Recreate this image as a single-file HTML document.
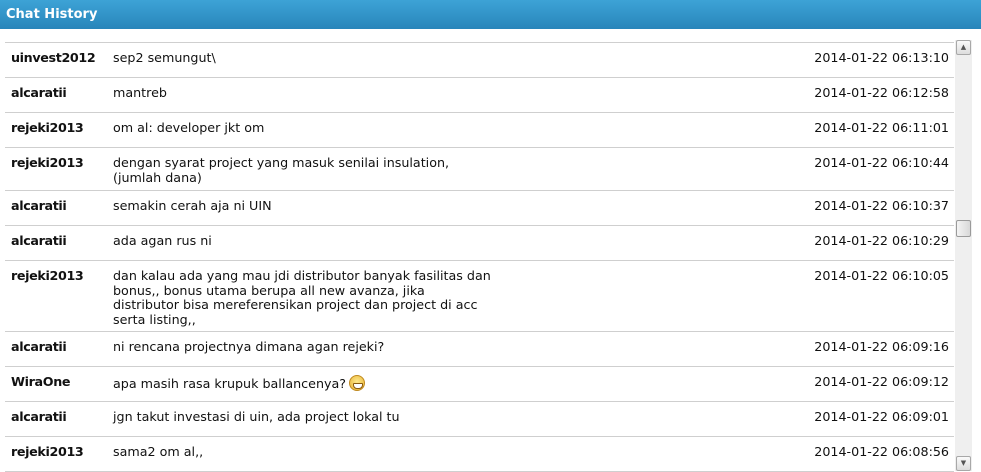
<!DOCTYPE html>
<html><head><style>
*{margin:0;padding:0;box-sizing:border-box}
body{width:981px;height:471px;overflow:hidden;background:#fff;font-family:Verdana,"DejaVu Sans",sans-serif;font-size:12.7px;color:#111;position:relative}
.hd{position:absolute;left:0;top:0;width:981px;height:29px;background:linear-gradient(#3da3d6,#2885ba);color:#fff;font-weight:bold;font-size:13px;padding:7px 0 0 6px}
.tb{position:absolute;left:5px;top:42px;width:949px;border-top:1px solid #cfcfcf}
.r{position:relative;border-bottom:1px solid #cfcfcf;line-height:14.7px}
.n{position:absolute;left:6px;top:8px;font-weight:bold;letter-spacing:-0.35px}
.m{position:absolute;left:108px;top:8px}
.d{position:absolute;right:5px;top:8px}
.sb{position:absolute;left:955px;top:40px;width:17px;height:431px;background:#efefef}
.btn{position:absolute;left:956px;width:15px;height:15px;background:linear-gradient(#fafafa,#ddd);border:1px solid #a8a8a8;border-radius:2px}
.th{position:absolute;left:956px;top:220px;width:15px;height:17px;background:linear-gradient(90deg,#f4f4f4,#d8d8d8);border:1px solid #9a9a9a;border-radius:2px}
.emo{display:inline-block;width:16px;height:16px;border-radius:50%;background:radial-gradient(circle at 50% 40%,#fde88a,#e8b030);border:1px solid #c08a20;vertical-align:-3px;margin-left:3px;position:relative}
.emo:after{content:"";position:absolute;left:3px;top:7px;width:8px;height:4px;background:#fff;border:1px solid #8a5a10;border-radius:1px 1px 4px 4px}
</style></head><body>
<div class="hd">Chat History</div>
<div class="tb">
<div class="r" style="height:35px"><span class="n">uinvest2012</span><span class="m">sep2 semungut\</span><span class="d">2014-01-22 06:13:10</span></div>
<div class="r" style="height:35px"><span class="n">alcaratii</span><span class="m">mantreb</span><span class="d">2014-01-22 06:12:58</span></div>
<div class="r" style="height:35px"><span class="n">rejeki2013</span><span class="m">om al: developer jkt om</span><span class="d">2014-01-22 06:11:01</span></div>
<div class="r" style="height:43px"><span class="n">rejeki2013</span><span class="m">dengan syarat project yang masuk senilai insulation,<br>(jumlah dana)</span><span class="d">2014-01-22 06:10:44</span></div>
<div class="r" style="height:35px"><span class="n">alcaratii</span><span class="m">semakin cerah aja ni UIN</span><span class="d">2014-01-22 06:10:37</span></div>
<div class="r" style="height:35px"><span class="n">alcaratii</span><span class="m">ada agan rus ni</span><span class="d">2014-01-22 06:10:29</span></div>
<div class="r" style="height:71px"><span class="n">rejeki2013</span><span class="m">dan kalau ada yang mau jdi distributor banyak fasilitas dan<br>bonus,, bonus utama berupa all new avanza, jika<br>distributor bisa mereferensikan project dan project di acc<br>serta listing,,</span><span class="d">2014-01-22 06:10:05</span></div>
<div class="r" style="height:35px"><span class="n">alcaratii</span><span class="m">ni rencana projectnya dimana agan rejeki?</span><span class="d">2014-01-22 06:09:16</span></div>
<div class="r" style="height:35px"><span class="n">WiraOne</span><span class="m">apa masih rasa krupuk ballancenya?<span class="emo"></span></span><span class="d">2014-01-22 06:09:12</span></div>
<div class="r" style="height:35px"><span class="n">alcaratii</span><span class="m">jgn takut investasi di uin, ada project lokal tu</span><span class="d">2014-01-22 06:09:01</span></div>
<div class="r" style="height:35px"><span class="n">rejeki2013</span><span class="m">sama2 om al,,</span><span class="d">2014-01-22 06:08:56</span></div>
</div>
<div class="sb"></div>
<div class="btn" style="top:40px;font-size:7px;color:#555;text-align:center;line-height:12px">▲</div>
<div class="th"></div>
<div class="btn" style="top:456px;font-size:7px;color:#555;text-align:center;line-height:12px">▼</div>
</body></html>
